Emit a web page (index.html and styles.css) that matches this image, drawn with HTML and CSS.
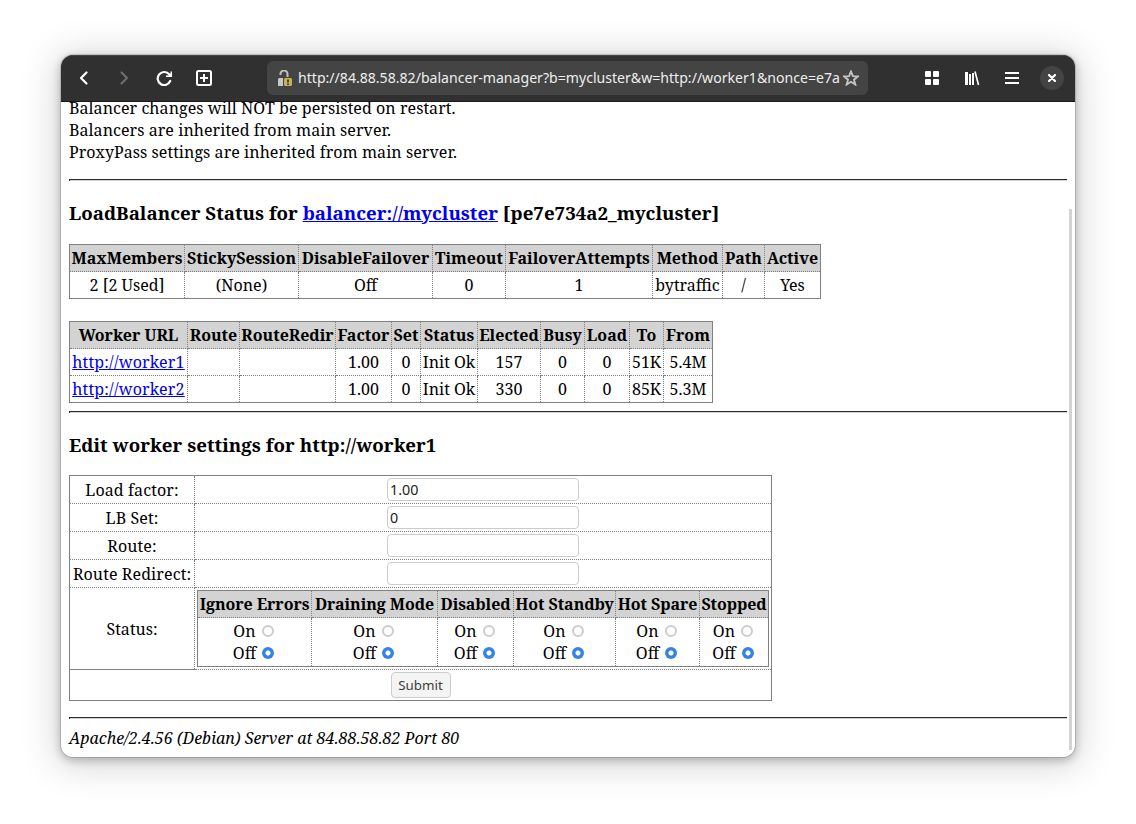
FILE: index.html
```html
<!DOCTYPE html>
<html lang="en">
<head>
<meta charset="utf-8">
<title>Balancer Manager</title>
<link rel="stylesheet" href="styles.css">
</head>
<body>
<div class="window">
  <header class="toolbar">
    <svg class="icon back" viewBox="0 0 16 16"><path d="M10.5 2.5 5 8l5.500 5.500" fill="none" stroke="#fff" stroke-width="2.200" stroke-linecap="round" stroke-linejoin="round"/></svg>
    <svg class="icon forward" viewBox="0 0 16 16"><path d="M5.500 2.500 11 8l-5.500 5.500" fill="none" stroke="#6e6e6e" stroke-width="2.200" stroke-linecap="round" stroke-linejoin="round"/></svg>
    <svg class="icon reload" viewBox="0 0 16 16"><path d="M13.300 4.500A6.500 6.500 0 1 0 14.200 11" fill="none" stroke="#fff" stroke-width="2.200" stroke-linecap="round"/><path d="M16 1.500V7h-6V5.500h2.500L14.500 3.500V1.500z" fill="#fff"/></svg>
    <svg class="icon newtab" viewBox="0 0 16 16"><rect x="1" y="1" width="14" height="14" rx="1.500" fill="none" stroke="#fff" stroke-width="2"/><path d="M8 4v8M4 8h8" stroke="#fff" stroke-width="2"/></svg>
    <div class="address-bar">
      <svg class="lock" viewBox="0 0 16 16"><path d="M3.500 5V4a3.500 3.500 0 0 1 7 0v3" fill="none" stroke="#c0c0c0" stroke-width="2"/><path d="M2 8H6v8H1V9z" fill="#c8c8c8"/><rect x="7" y="8" width="8" height="8" rx="1.500" fill="#c4b454"/><path d="M11 9.500v3M11 13.500v1.500" stroke="#444" stroke-width="2"/></svg>
      <span class="url">http://84.88.58.82/balancer-manager?b=mycluster&amp;w=http://worker1&amp;nonce=e7a</span>
      <svg class="star" viewBox="0 0 16 16"><path d="M8 1.500l1.900 4.700 4.900.3-3.800 3.200 1.300 4.800L8 11.800l-4.300 2.700L5 9.700 1.200 6.500l4.900-.3z" fill="none" stroke="#c4c4c4" stroke-width="1.900"/></svg>
    </div>
    <svg class="icon grid" viewBox="0 0 16 16"><g fill="#fff"><rect x="1" y="1" width="6" height="6" rx="1"/><rect x="9" y="1" width="6" height="6" rx="1"/><rect x="1" y="9" width="6" height="6" rx="1"/><rect x="9" y="9" width="6" height="6" rx="1"/></g></svg>
    <svg class="icon library" viewBox="0 0 16 16"><path d="M1 2h3v13H1zM5 4h2v11H5zM8 3h2v12H8z" fill="#fff"/><path d="M11 1.500 14.500 15" stroke="#fff" stroke-width="1.600"/></svg>
    <svg class="icon menu" viewBox="0 0 16 16"><path d="M1 3h14M1 8h14M1 13h14" stroke="#fff" stroke-width="2"/></svg>
    <div class="close"><svg viewBox="0 0 8 8"><path d="M1 1l6 6M7 1 1 7" stroke="#fff" stroke-width="2.200" stroke-linecap="round"/></svg></div>
  </header>
  <main class="page">
    <p class="notes">Balancer changes will NOT be persisted on restart.<br>Balancers are inherited from main server.<br>ProxyPass settings are inherited from main server.</p>
    <hr class="rule">
    <h3 class="title">LoadBalancer Status for <a href="#">balancer://mycluster</a> [pe7e734a2_mycluster]</h3>
    <table class="data balancer">
      <colgroup><col class="w115"><col class="w114"><col class="w134"><col class="w73"><col class="w147"><col class="w70"><col class="w42"><col class="w56"></colgroup>
      <tr><th>MaxMembers</th><th>StickySession</th><th>DisableFailover</th><th>Timeout</th><th>FailoverAttempts</th><th>Method</th><th>Path</th><th>Active</th></tr>
      <tr><td>2 [2 Used]</td><td>(None)</td><td>Off</td><td>0</td><td>1</td><td>bytraffic</td><td>/</td><td>Yes</td></tr>
    </table>
    <table class="data workers">
      <colgroup><col class="w118"><col class="w52"><col class="w96"><col class="w56"><col class="w29"><col class="w57"><col class="w63"><col class="w44"><col class="w45"><col class="w34"><col class="w49"></colgroup>
      <tr><th>Worker URL</th><th>Route</th><th>RouteRedir</th><th>Factor</th><th>Set</th><th>Status</th><th>Elected</th><th>Busy</th><th>Load</th><th>To</th><th>From</th></tr>
      <tr><td><a href="#">http://worker1</a></td><td></td><td></td><td>1.00</td><td>0</td><td>Init Ok</td><td>157</td><td>0</td><td>0</td><td>51K</td><td>5.4M</td></tr>
      <tr><td><a href="#">http://worker2</a></td><td></td><td></td><td>1.00</td><td>0</td><td>Init Ok</td><td>330</td><td>0</td><td>0</td><td>85K</td><td>5.3M</td></tr>
    </table>
    <hr class="rule">
    <h3 class="title edit-title">Edit worker settings for http://worker1</h3>
    <table class="data settings">
      <colgroup><col class="w125"><col class="w577"></colgroup>
      <tr class="field"><td>Load factor:</td><td><input class="text" type="text" value="1.00"></td></tr>
      <tr class="field"><td>LB Set:</td><td><input class="text" type="text" value="0"></td></tr>
      <tr class="field"><td>Route:</td><td><input class="text" type="text"></td></tr>
      <tr class="field"><td>Route Redirect:</td><td><input class="text" type="text"></td></tr>
      <tr class="status"><td class="status-label">Status:</td><td>
        <table class="data modes">
          <colgroup><col class="w114"><col class="w126"><col class="w76"><col class="w102"><col class="w84"><col class="w69"></colgroup>
          <tr><th>Ignore Errors</th><th>Draining Mode</th><th>Disabled</th><th>Hot Standby</th><th>Hot Spare</th><th>Stopped</th></tr>
          <tr class="options">
            <td>On <i class="radio"></i><br>Off <i class="radio on"></i></td>
            <td>On <i class="radio"></i><br>Off <i class="radio on"></i></td>
            <td>On <i class="radio"></i><br>Off <i class="radio on"></i></td>
            <td>On <i class="radio"></i><br>Off <i class="radio on"></i></td>
            <td>On <i class="radio"></i><br>Off <i class="radio on"></i></td>
            <td>On <i class="radio"></i><br>Off <i class="radio on"></i></td>
          </tr>
        </table>
      </td></tr>
      <tr class="actions"><td colspan="2"><button class="submit">Submit</button></td></tr>
    </table>
    <hr class="rule">
    <address class="server">Apache/2.4.56 (Debian) Server at 84.88.58.82 Port 80</address>
    <div class="scrollbar"></div>
  </main>
</div>
</body>
</html>
```
FILE: styles.css
```css
* { box-sizing: border-box; }
body { margin: 0; height: 824px; padding: 55px 61px 0; overflow: hidden; background: #fff; }
.window { width: 1014px; height: 702px; border-radius: 12px; overflow: hidden; background: #fff; box-shadow: 0 0 0 1px rgba(0,0,0,.14), 0 3px 9px 1px rgba(0,0,0,.22), 0 4px 36px 5px rgba(0,0,0,.17); }
.toolbar { display: flex; align-items: center; height: 47px; padding: 0 11px 1px 15px; background: #303030; border-bottom: 1px solid #1a1a1a; box-shadow: inset 0 1px #454545; }
.icon { width: 16px; height: 16px; flex: none; }
.forward, .reload, .newtab { margin-left: 24px; }
.address-bar { display: flex; align-items: center; width: 601px; height: 34px; margin: 0 56px 0 55px; padding: 0 9px 0 10px; border-radius: 6px; background: #444; }
.lock { width: 16px; height: 16px; flex: none; }
.url { flex: 1; min-width: 0; margin-left: 5px; white-space: nowrap; font: 14.1px/20px "Noto Sans", sans-serif; color: #eee; }
.star { width: 16px; height: 16px; flex: none; }
.library, .menu { margin-left: 24px; }
.close { display: flex; align-items: center; justify-content: center; width: 24px; height: 24px; margin-left: 20px; border-radius: 50%; background: #444; }
.close svg { width: 8px; height: 8px; }
.page { position: relative; height: 655px; padding: 0 8px; overflow: hidden; font: 16px/22px "Noto Serif", "Droid Serif", "Liberation Serif", serif; color: #000; }
.notes { margin: -5px 0 16px; letter-spacing: .06px; }
.rule { height: 2px; margin: 0; border: 0; border-top: 1px solid #2d2d2d; border-left: 1px solid #2d2d2d; background: #d0d0d0; }
.title { margin: 19px 0 18px; font-size: 18.72px; line-height: 26px; }
.edit-title { margin-bottom: 17px; letter-spacing: .05px; }
a { color: #00e; text-decoration: underline; }
.data { table-layout: fixed; border-collapse: collapse; border: 1px solid #808080; text-align: center; }
.data th, .data td { height: 27px; padding: 0; border: 1px dotted #808080; white-space: nowrap; }
.data th { background: #d3d3d3; }
.balancer { width: 752px; margin-bottom: 22px; }
.workers { width: 644px; margin-bottom: 8px; }
.workers a { letter-spacing: .2px; }
.settings { width: 703px; margin-bottom: 16px; }
.settings .field > td { height: 28px; letter-spacing: .12px; }
.settings .status > td { height: 82px; }
.settings .status > .status-label { border-bottom-style: solid; }
.settings .actions > td { height: 31px; }
.modes { width: 572px; margin: 0 auto; }
.modes th { letter-spacing: -.08px; }
.settings .options > td { height: 49px; }
.text { display: block; width: 192px; height: 23px; margin: 0 auto; padding: 0 2px; border: 1px solid #cdcdcd; border-radius: 4px; background: #fff; font: 14.3px/20px "Noto Sans", sans-serif; color: #222; }
.radio { display: inline-block; width: 12px; height: 12px; margin: 0 2px; border: 2px solid #cdcdcd; border-radius: 50%; vertical-align: 0; }
.radio.on { border: 0; background: radial-gradient(circle, #fff 2px, #3584e4 3px); }
.submit { display: block; width: 60px; height: 26px; margin: 0 auto; padding: 0; border: 1px solid #cdcdcd; border-radius: 4px; background: #f4f4f4; font: 13.33px/20px "Noto Sans", sans-serif; color: #3d3d3d; }
.server { margin-top: 8px; letter-spacing: .03px; }
.scrollbar { position: absolute; top: 107px; right: 3px; width: 3px; height: 541px; background: #d3d3d3; }
.w29 { width: 29px; } .w34 { width: 34px; } .w42 { width: 42px; } .w44 { width: 44px; } .w45 { width: 45px; } .w49 { width: 49px; }
.w52 { width: 52px; } .w56 { width: 56px; } .w57 { width: 57px; } .w63 { width: 63px; } .w69 { width: 69px; } .w70 { width: 70px; }
.w73 { width: 73px; } .w76 { width: 76px; } .w84 { width: 84px; } .w96 { width: 96px; } .w102 { width: 102px; } .w114 { width: 114px; }
.w115 { width: 115px; } .w118 { width: 118px; } .w125 { width: 125px; } .w126 { width: 126px; } .w134 { width: 134px; } .w147 { width: 147px; } .w577 { width: 577px; }
```
